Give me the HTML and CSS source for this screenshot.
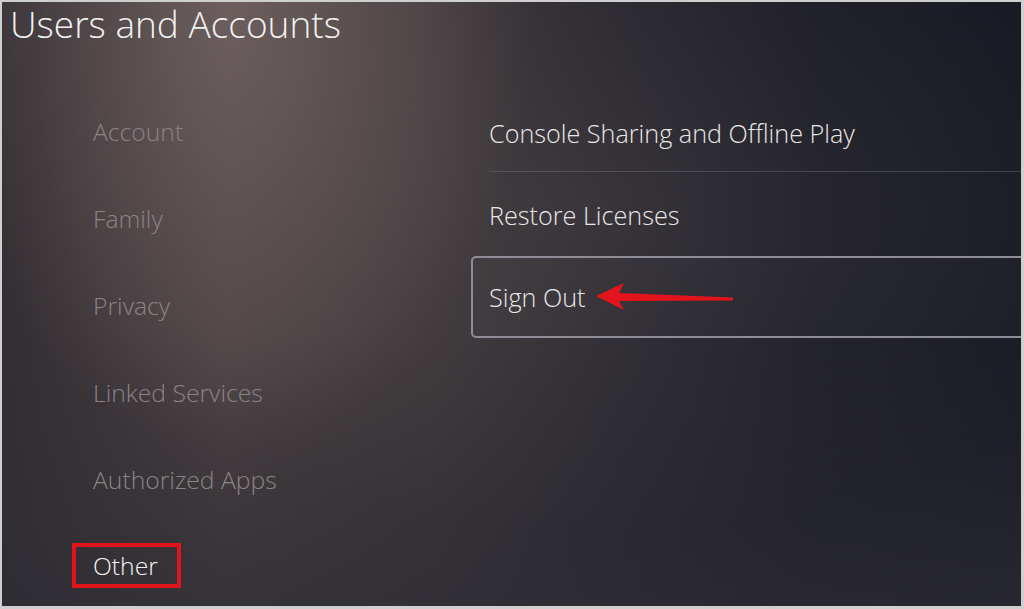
FILE: index.html
```html
<!DOCTYPE html>
<html lang="en">
<head>
<meta charset="utf-8">
<title>Users and Accounts</title>
<link rel="stylesheet" href="styles.css">
</head>
<body>
<div class="frame">
  <header class="header">
    <h1 class="title">Users and Accounts</h1>
  </header>
  <main class="main">
    <nav class="nav">
      <ul class="nav-list">
        <li class="nav-item"><span class="nav-label">Account</span></li>
        <li class="nav-item"><span class="nav-label">Family</span></li>
        <li class="nav-item"><span class="nav-label">Privacy</span></li>
        <li class="nav-item"><span class="nav-label">Linked Services</span></li>
        <li class="nav-item"><span class="nav-label">Authorized Apps</span></li>
        <li class="nav-item nav-item-active"><span class="nav-label">Other</span></li>
      </ul>
    </nav>
    <section class="options">
      <ul class="option-list">
        <li class="option"><div class="option-body option-body-sep">Console Sharing and Offline Play</div></li>
        <li class="option"><div class="option-body">Restore Licenses</div></li>
        <li class="option option-focused"><div class="option-body">Sign Out</div></li>
      </ul>
    </section>
  </main>
  <svg class="arrow" width="146" height="32" viewBox="0 0 146 32" aria-hidden="true">
    <polygon points="4,14 32,1 27,11 141,15.5 141,18.5 27,19 32,28" fill="#e3141b"/>
  </svg>
</div>
</body>
</html>
```
FILE: styles.css
```css
* { box-sizing: border-box; }
html, body { margin: 0; padding: 0; }
body { background: #c9c9c9; font-family: "Open Sans", "Noto Sans", sans-serif; }

.frame {
  position: relative;
  width: 1024px;
  height: 609px;
  overflow: hidden;
  border-style: solid;
  border-color: #cfcfcf;
  border-width: 2px 3px 3px 2px;
  background:
    radial-gradient(ellipse 300px 440px at 230px 10px, rgba(140,122,118,0.5), rgba(140,122,118,0) 100%),
    radial-gradient(ellipse 560px 320px at 600px 210px, rgba(110,100,100,0.2), rgba(110,100,100,0) 100%),
    linear-gradient(180deg, rgba(0,0,0,0) 55%, rgba(45,44,52,0.7) 100%),
    linear-gradient(90deg, #332e33 0%, #4a4143 22%, #3d373a 42%, #2a282f 60%, #1c1d26 80%, #181a23 100%);
}

.header { height: 86px; padding: 3px 0 0 8px; }
.title {
  margin: 0;
  font-weight: 300;
  font-size: 37px;
  line-height: 38px;
  color: #f2f2f2;
}

.main { display: flex; }

.nav { width: 469px; padding-left: 70px; padding-top: 0.5px; flex: none; }
.nav-list { list-style: none; margin: 0; padding: 0; }
.nav-item { height: 86.8px; display: flex; align-items: center; }
.nav-label {
  display: inline-block;
  border: 4px solid transparent;
  padding: 0 19px 0 17px;
  font-size: 24.7px;
  font-weight: 300;
  line-height: 37px;
  color: #8a8484;
}
.nav-item-active .nav-label { border-color: #e2141b; color: #f4f4f4; }

.options { flex: 1; margin-right: -30px; padding-top: 4px; }
.option-list { list-style: none; margin: 0; padding: 0; }
.option {
  height: 82px;
  border: 2px solid transparent;
  border-radius: 5px;
  padding-left: 16px;
}
.option-body {
  height: 100%;
  display: flex;
  align-items: center;
  font-size: 25.2px;
  font-weight: 300;
  color: #e8e8e8;
}
.option-body-sep { border-bottom: 1px solid rgba(120,120,130,0.4); }
.option-focused {
  border-color: #8e8c96;
  background: rgba(255,255,255,0.015);
}

.arrow { position: absolute; left: 590px; top: 280px; }
```
